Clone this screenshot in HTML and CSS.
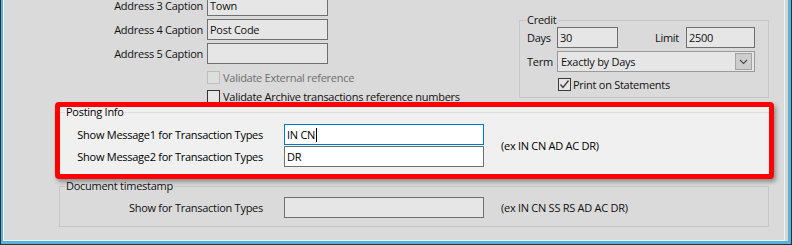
FILE: index.html
```html
<!DOCTYPE html>
<html lang="en">
<head>
    <meta charset="UTF-8">
    <meta name="viewport" content="width=device-width, initial-scale=1.0">
    <title>Customer Settings</title>
    <link rel="stylesheet" href="styles.css">
</head>
<body>

    <div class="window">
        <div class="frame">
            <div class="panel">

                <!-- Address captions + validation -->
                <div class="top">
                    <div class="fields">
                        <div class="form-grid">
                            <span class="caption">Address 3 Caption</span>
                            <div class="textbox dim">Town</div>
                            <span class="caption">Address 4 Caption</span>
                            <div class="textbox dim">Post Code</div>
                            <span class="caption">Address 5 Caption</span>
                            <div class="textbox dim"></div>
                        </div>
                        <div class="check-row disabled first"><span class="box"></span>Validate External reference</div>
                        <div class="check-row"><span class="box"></span>Validate Archive transactions reference numbers</div>
                    </div>

                    <!-- Credit -->
                    <fieldset class="group credit">
                        <legend>Credit</legend>
                        <div class="group-body">
                            <div class="credit-row days">
                                <span class="caption left">Days</span>
                                <div class="textbox dim">30</div>
                                <span class="caption">Limit</span>
                                <div class="textbox dim">2500</div>
                            </div>
                            <div class="credit-row term">
                                <span class="caption left">Term</span>
                                <div class="combo">Exactly by Days
                                    <span class="drop">
                                        <svg width="9" height="6" viewBox="0 0 9 6"><polyline points="1,1 4.5,4.5 8,1" fill="none" stroke="#4a4a4a" stroke-width="1.2"/></svg>
                                    </span>
                                </div>
                            </div>
                            <div class="check-row print">
                                <span class="box">
                                    <svg width="11" height="11" viewBox="0 0 11 11"><polyline points="1.5,5.5 4,8.5 9.5,1.5" fill="none" stroke="#3a3a3a" stroke-width="1.3"/></svg>
                                </span>Print on Statements
                            </div>
                        </div>
                    </fieldset>
                </div>

                <!-- Posting Info (highlighted) -->
                <div class="highlight">
                    <fieldset class="group posting">
                        <legend>Posting Info</legend>
                        <div class="type-body">
                            <div class="type-grid">
                                <span class="caption">Show Message1 for Transaction Types</span>
                                <div class="textbox focused">IN CN<span class="caret"></span></div>
                                <span class="caption">Show Message2 for Transaction Types</span>
                                <div class="textbox">DR</div>
                            </div>
                            <span class="hint">(ex IN CN AD AC DR)</span>
                        </div>
                    </fieldset>
                </div>

                <!-- Document timestamp -->
                <fieldset class="group stamp">
                    <legend>Document timestamp</legend>
                    <div class="type-body">
                        <div class="type-grid">
                            <span class="caption">Show for Transaction Types</span>
                            <div class="textbox dim"></div>
                        </div>
                        <span class="hint">(ex IN CN SS RS AD AC DR)</span>
                    </div>
                </fieldset>

            </div>
        </div>
    </div>

</body>
</html>
```

FILE: styles.css
```css
* {
    margin: 0;
    padding: 0;
    box-sizing: border-box;
    font-family: 'Open Sans', 'Noto Sans', sans-serif;
}
html, body {
    width: 792px;
    height: 245px;
    overflow: hidden;
}
body {
    font-size: 11px;
    letter-spacing: -0.27px;
    color: #111;
    background: #dadada;
}
.window {
    display: flex;
    height: 245px;
    border-left: 1px solid #27313a;
    border-right: 1px solid #27313a;
    border-bottom: 1px solid #27313a;
}
.frame {
    flex: 1;
    display: flex;
    border-left: 2px solid #56b3dc;
    border-right: 3px solid #56b3dc;
    border-bottom: 3px solid #56b3dc;
    padding-right: 3px;
    background: #d6d6d6;
}
.panel {
    flex: 1;
    display: flex;
    flex-direction: column;
    background: #dadada;
    border-left: 1px solid #f6f6f6;
    border-right: 1px solid #f3f3f3;
    border-bottom: 1px solid #f3f3f3;
}

/* text boxes */
.textbox {
    height: 21px;
    border: 1px solid #6f6f6f;
    background: #fff;
    padding: 0 2px;
    line-height: 19px;
    white-space: nowrap;
    color: #000;
}
.textbox.dim {
    background: #e6e6e6;
    color: #111;
}
.textbox.focused {
    border-color: #0078d7;
}
.caret {
    display: inline-block;
    width: 1px;
    height: 14px;
    background: #000;
    vertical-align: -3px;
    margin-left: 1px;
}
.caption {
    line-height: 21px;
    text-align: right;
    white-space: nowrap;
}
.caption.left {
    text-align: left;
}

/* checkboxes */
.check-row {
    display: flex;
    align-items: center;
    height: 19px;
    margin-left: 203px;
    gap: 3px;
    white-space: nowrap;
}
.check-row.first {
    margin-top: 4px;
}
.box {
    width: 13px;
    height: 13px;
    border: 1px solid #333;
    background: #e6e6e6;
    display: flex;
    align-items: center;
    justify-content: center;
}
.check-row.disabled {
    color: #6e6e6e;
}
.check-row.disabled .box {
    border-color: #bdbdbd;
    background: #dedede;
}

/* top area */
.top {
    display: flex;
    height: 107px;
    margin-top: -5px;
}
.fields {
    width: 515px;
}
.form-grid {
    display: grid;
    grid-template-columns: 199px 121px;
    column-gap: 4px;
    row-gap: 3px;
}

/* group boxes */
.group {
    border: 1px solid #c6c6c6;
    min-width: 0;
}
.group legend {
    margin-left: 5px;
    padding: 0 1px;
    line-height: 14px;
}
.credit {
    width: 250px;
    height: 85px;
    margin-top: 18px;
}
.credit legend {
    margin-left: 6px;
}
.group-body {
    padding-left: 7px;
}
.credit-row {
    display: grid;
    height: 21px;
}
.credit-row.days {
    grid-template-columns: 30px 61px 68px 69px;
}
.credit-row.days .caption:nth-child(3) {
    padding-right: 7px;
}
.credit-row.term {
    grid-template-columns: 30px 198px;
    margin-top: 3px;
}
.combo {
    position: relative;
    height: 21px;
    border: 1px solid #9a9a9a;
    background: #e6e6e6;
    padding: 0 3px;
    line-height: 19px;
}
.drop {
    position: absolute;
    right: 2px;
    top: 1px;
    width: 17px;
    height: 17px;
    border: 1px solid #a3a3a3;
    background: #cdcdcd;
    display: flex;
    align-items: center;
    justify-content: center;
}
.check-row.print {
    margin: 6px 0 0 31px;
    height: 13px;
    gap: 2px;
}
.check-row.print .box {
    border-color: #3a3a3a;
}

/* highlighted posting block */
.highlight {
    position: relative;
    width: 719px;
    height: 77px;
    margin-left: 51px;
    border: 5px solid #ff0000;
    border-radius: 4px;
    background: #f0f0f0;
    box-shadow: 2px 3px 4px rgba(0, 0, 0, 0.35);
    color: #000;
}
.posting {
    border: none;
    border-top: 1px solid #dcdcdc;
}
.posting legend {
    line-height: 10px;
}
.type-body {
    display: flex;
    align-items: center;
}
.posting .type-body {
    padding-top: 7px;
}
.type-grid {
    display: grid;
    grid-template-columns: 203px 200px;
    column-gap: 21px;
    row-gap: 1px;
}
.hint {
    margin-left: 17px;
    white-space: nowrap;
}

/* document timestamp */
.stamp {
    width: 710px;
    margin-left: 55px;
}
.stamp .type-body {
    padding: 4px 0 8px;
}
```
